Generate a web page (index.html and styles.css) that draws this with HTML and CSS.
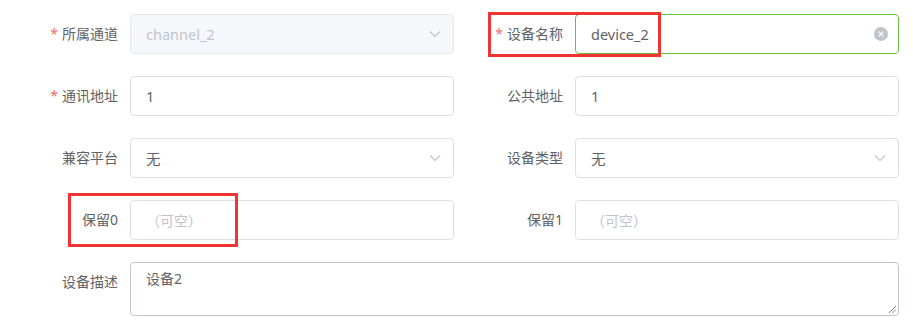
FILE: index.html
```html
<!DOCTYPE html>
<html lang="zh-CN">
<head>
<meta charset="utf-8">
<title>设备表单</title>
<link rel="stylesheet" href="styles.css">
</head>
<body>
<form class="form">
  <div class="row">
    <div class="item">
      <label class="label required">所属通道</label>
      <div class="input is-disabled">
        <span class="value">channel_2</span>
        <svg class="arrow" width="12" height="8" viewBox="0 0 12 8"><path d="M1 1.5 L6 6.5 L11 1.5" fill="none" stroke="#c0c4cc" stroke-width="1.1"/></svg>
      </div>
    </div>
    <div class="item">
      <label class="label required">设备名称</label>
      <div class="input is-success">
        <span class="value">device_2</span>
        <svg class="clear" width="14" height="14" viewBox="0 0 14 14"><circle cx="7" cy="7" r="7" fill="#c0c4cc"/><path d="M4.6 4.6 L9.4 9.4 M9.4 4.6 L4.6 9.4" stroke="#fff" stroke-width="1.2"/></svg>
      </div>
    </div>
  </div>
  <div class="row">
    <div class="item">
      <label class="label required">通讯地址</label>
      <div class="input"><span class="value">1</span></div>
    </div>
    <div class="item">
      <label class="label">公共地址</label>
      <div class="input"><span class="value">1</span></div>
    </div>
  </div>
  <div class="row">
    <div class="item">
      <label class="label">兼容平台</label>
      <div class="input">
        <span class="value">无</span>
        <svg class="arrow" width="12" height="8" viewBox="0 0 12 8"><path d="M1 1.5 L6 6.5 L11 1.5" fill="none" stroke="#c0c4cc" stroke-width="1.1"/></svg>
      </div>
    </div>
    <div class="item">
      <label class="label">设备类型</label>
      <div class="input">
        <span class="value">无</span>
        <svg class="arrow" width="12" height="8" viewBox="0 0 12 8"><path d="M1 1.5 L6 6.5 L11 1.5" fill="none" stroke="#c0c4cc" stroke-width="1.1"/></svg>
      </div>
    </div>
  </div>
  <div class="row">
    <div class="item">
      <label class="label">保留0</label>
      <div class="input"><span class="placeholder">（可空）</span></div>
    </div>
    <div class="item">
      <label class="label">保留1</label>
      <div class="input"><span class="placeholder">（可空）</span></div>
    </div>
  </div>
  <div class="row">
    <div class="item wide">
      <label class="label">设备描述</label>
      <div class="textarea">
        <span class="value">设备2</span>
        <svg class="resize" width="10" height="10" viewBox="0 0 10 10"><path d="M9 2 L2 9 M9 5.5 L5.5 9" stroke="#888" stroke-width="1"/></svg>
      </div>
    </div>
  </div>
</form>
<div class="mark mark-name"></div>
<div class="mark mark-res"></div>
</body>
</html>
```
FILE: styles.css
```css
* { box-sizing: border-box; }
body {
  margin: 0;
  background: #fff;
  font-family: "Noto Sans", "Noto Sans CJK SC", sans-serif;
  font-size: 14px;
  color: #606266;
}
.form {
  padding: 14px 0 0 10px;
}
.row {
  display: flex;
  margin-bottom: 22px;
}
.item {
  display: flex;
  width: 445px;
}
.item.wide {
  width: 889px;
}
.label {
  width: 120px;
  padding-right: 12px;
  text-align: right;
  line-height: 40px;
  color: #606266;
  font-size: 14px;
}
.label.required::before {
  content: "*";
  color: #f56c6c;
  margin-right: 4px;
}
.input {
  width: 324px;
  height: 40px;
  border: 1px solid #dcdfe6;
  border-radius: 4px;
  padding: 0 15px;
  display: flex;
  align-items: center;
  justify-content: space-between;
  background: #fff;
}
.input.is-disabled {
  background: #f5f7fa;
  border-color: #e4e7ed;
}
.input.is-disabled .value { color: #c0c4cc; }
.input.is-success { border-color: #67c23a; }
.value {
  color: #606266;
  font-size: 14px;
}
.input .value { font-size: 14.5px; }
.placeholder {
  color: #c0c4cc;
  font-size: 14px;
}
.arrow { margin-right: -3px; }
.clear { margin-right: -5px; }
.textarea {
  position: relative;
  width: 769px;
  height: 54px;
  border: 1px solid #c0c4cc;
  border-radius: 4px;
  padding: 5px 15px;
  line-height: 21px;
}
.resize {
  position: absolute;
  right: 1px;
  bottom: 1px;
}
.mark {
  position: absolute;
  border: 3px solid #f03434;
}
.mark-name {
  left: 488px;
  top: 12px;
  width: 173px;
  height: 45px;
}
.mark-res {
  left: 68px;
  top: 193px;
  width: 170px;
  height: 54px;
}
```
